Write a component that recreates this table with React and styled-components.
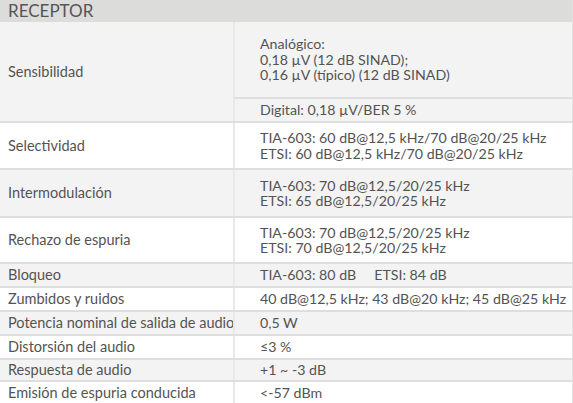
import React from 'react';
import styled, { createGlobalStyle } from 'styled-components';

const GlobalStyle = createGlobalStyle`
  html, body {
    margin: 0;
    padding: 0;
    background: #ffffff;
  }
  body {
    font-family: Lato, "Liberation Sans", sans-serif;
    color: #535353;
  }
`;

const Table = styled.div`
  width: 572px;
  border-right: 2px solid #e2e2e2;
`;

const Header = styled.div`
  height: 22px;
  background: #dcdcdb;
  font-size: 17px;
  line-height: 22px;
  padding-left: 8px;
  color: #555555;
`;

const Row = styled.div`
  display: grid;
  grid-template-columns: 233px 1fr;
  background: ${p => (p.shaded ? '#f3f3f3' : '#ffffff')};
  border-bottom: 2px solid #dedede;
  font-size: 14.5px;
  line-height: 15.5px;
`;

const Label = styled.div`
  display: flex;
  align-items: center;
  padding-left: 8px;
  white-space: nowrap;
  min-height: ${p => p.h}px;
`;

const Value = styled.div`
  display: flex;
  flex-direction: column;
  justify-content: center;
  border-left: 2px solid #e8e8e8;
  padding-left: 25px;
  font-size: 14.2px;
  white-space: nowrap;
  min-height: ${p => p.h}px;
`;

const Stack = styled.div`
  display: flex;
  flex-direction: column;
  border-left: 2px solid #e8e8e8;
  font-size: 14.2px;
`;

const SubValue = styled.div`
  display: flex;
  flex-direction: column;
  justify-content: center;
  padding-left: 25px;
  height: ${p => p.h}px;
  border-top: ${p => (p.divided ? '2px solid #dedede' : 'none')};
`;

const Gap = styled.span`
  display: inline-block;
  width: 18px;
`;

const rows = [
  { label: 'Selectividad', h: 45, lines: ['TIA-603: 60 dB@12,5 kHz/70 dB@20/25 kHz', 'ETSI: 60 dB@12,5 kHz/70 dB@20/25 kHz'] },
  { label: 'Intermodulación', h: 46, lines: ['TIA-603: 70 dB@12,5/20/25 kHz', 'ETSI: 65 dB@12,5/20/25 kHz'] },
  { label: 'Rechazo de espuria', h: 44, lines: ['TIA-603: 70 dB@12,5/20/25 kHz', 'ETSI: 70 dB@12,5/20/25 kHz'] },
  { label: 'Bloqueo', h: 22, lines: [<>TIA-603: 80 dB<Gap />ETSI: 84 dB</>] },
  { label: 'Zumbidos y ruidos', h: 22, lines: ['40 dB@12,5 kHz; 43 dB@20 kHz; 45 dB@25 kHz'] },
  { label: 'Potencia nominal de salida de audio', h: 22, lines: ['0,5 W'] },
  { label: 'Distorsión del audio', h: 22, lines: ['≤3 %'] },
  { label: 'Respuesta de audio', h: 20, lines: ['+1 ~ -3 dB'] },
  { label: 'Emisión de espuria conducida', h: 22, lines: ['<-57 dBm'] },
];

export default function App() {
  return (
    <>
      <GlobalStyle />
      <Table>
        <Header>RECEPTOR</Header>
        <Row shaded>
          <Label h={99}>Sensibilidad</Label>
          <Stack>
            <SubValue h={75}>
              <div>Analógico:</div>
              <div>0,18 µV (12 dB SINAD);</div>
              <div>0,16 µV (típico) (12 dB SINAD)</div>
            </SubValue>
            <SubValue h={22} divided>
              <div>Digital: 0,18 µV/BER 5 %</div>
            </SubValue>
          </Stack>
        </Row>
        {rows.map((r, i) => (
          <Row key={r.label} shaded={i % 2 === 1}>
            <Label h={r.h}>{r.label}</Label>
            <Value h={r.h}>
              {r.lines.map((l, j) => (
                <div key={j}>{l}</div>
              ))}
            </Value>
          </Row>
        ))}
      </Table>
    </>
  );
}
